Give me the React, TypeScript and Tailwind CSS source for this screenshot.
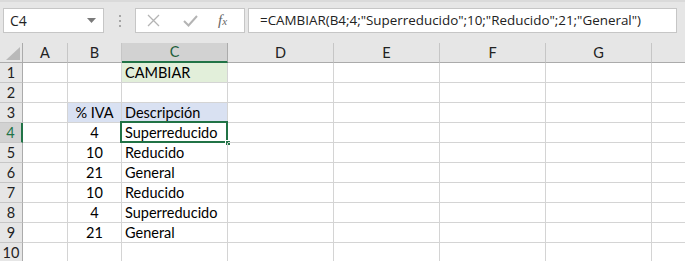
import React from "react";

const cols = ["A", "B", "C", "D", "E", "F", "G", ""];
const widths = ["w-[45px]", "w-[54px]", "w-[106px]", "w-[106px]", "w-[106px]", "w-[106px]", "w-[106px]", "w-[40px]"];

type Cell = { text?: string; align?: "left" | "center"; bg?: string };

const data: Record<number, Record<number, Cell>> = {
  1: { 2: { text: "CAMBIAR", bg: "bg-[#e2efda]" } },
  3: { 1: { text: "% IVA", align: "center", bg: "bg-[#d9e1f2]" }, 2: { text: "Descripción", bg: "bg-[#d9e1f2]" } },
  4: { 1: { text: "4", align: "center" }, 2: { text: "Superreducido" } },
  5: { 1: { text: "10", align: "center" }, 2: { text: "Reducido" } },
  6: { 1: { text: "21", align: "center" }, 2: { text: "General" } },
  7: { 1: { text: "10", align: "center" }, 2: { text: "Reducido" } },
  8: { 1: { text: "4", align: "center" }, 2: { text: "Superreducido" } },
  9: { 1: { text: "21", align: "center" }, 2: { text: "General" } },
};

const rows = [1, 2, 3, 4, 5, 6, 7, 8, 9, 10];

export default function App() {
  return (
    <div className="w-[685px] h-[261px] overflow-hidden bg-white font-['Lato',sans-serif]">
      {/* barra de fórmulas */}
      <div className="h-[43px] bg-[#e6e6e6] border-t-[2px] border-[#dadada] flex items-start pt-[6px]">
        <div className="ml-[3px] w-[101px] h-[25px] shrink-0 bg-white border border-[#c6c6c6] flex items-center justify-between pl-[6px] pr-[7px]">
          <span className="text-[14px] text-[#222] font-['Open_Sans',sans-serif]">C4</span>
          <svg width="9" height="5" viewBox="0 0 9 5"><path d="M0 0h9L4.5 5z" fill="#7a7a7a" /></svg>
        </div>
        <div className="w-[31px] h-[25px] shrink-0 flex flex-col items-center justify-center gap-[3px]">
          <span className="w-[2px] h-[2px] bg-[#a6a6a6]" />
          <span className="w-[2px] h-[2px] bg-[#a6a6a6]" />
          <span className="w-[2px] h-[2px] bg-[#a6a6a6]" />
        </div>
        <div className="w-[110px] h-[25px] shrink-0 bg-white border border-[#c6c6c6] flex items-center">
          <svg className="ml-[11px]" width="13" height="13" viewBox="0 0 13 13">
            <path d="M1 1l11 11M12 1L1 12" stroke="#b4b4b4" strokeWidth="1.3" />
          </svg>
          <svg className="ml-[23px]" width="15" height="12" viewBox="0 0 15 12">
            <path d="M1 6l4.5 4.5L14 1" stroke="#b4b4b4" strokeWidth="2" fill="none" />
          </svg>
          <span className="ml-[20px] text-[15px] italic text-[#666] font-['Liberation_Serif',serif] leading-none">
            f<span className="text-[11px]">x</span>
          </span>
        </div>
        <div className="ml-[3px] w-[429px] h-[25px] shrink-0 bg-white border border-[#c6c6c6] flex items-center pl-[11px]">
          <span className="text-[13.4px] text-[#222] font-['Open_Sans',sans-serif] whitespace-nowrap">
            =CAMBIAR(B4;4;"Superreducido";10;"Reducido";21;"General")
          </span>
        </div>
      </div>

      {/* cabecera de columnas */}
      <div className="flex h-[20px] bg-[#e6e6e6]">
        <div className="w-[23px] h-[20px] shrink-0 border-r border-b border-[#ababab] flex items-end justify-end pr-[2px] pb-[2px]">
          <svg width="14" height="13" viewBox="0 0 14 13"><path d="M14 0v13H0z" fill="#b9b9b9" /></svg>
        </div>
        {cols.map((c, i) =>
          c === "C" ? (
            <div key={i} className={`${widths[i]} h-[20px] shrink-0 bg-[#d2d2d2] border-r border-[#ababab] border-b-2 border-b-[#217346] flex items-center justify-center text-[14.5px] text-[#1d5e3a]`}>
              {c}
            </div>
          ) : (
            <div key={i} className={`${widths[i]} h-[20px] shrink-0 border-r border-[#c6c6c6] border-b border-b-[#ababab] flex items-center justify-center text-[14.5px] text-[#222]`}>
              {c}
            </div>
          )
        )}
      </div>

      {/* filas */}
      {rows.map((r) => (
        <div key={r} className="flex h-[20px]">
          {r === 4 ? (
            <div className="w-[23px] h-[20px] shrink-0 bg-[#d2d2d2] border-r-2 border-[#217346] border-b border-b-[#c6c6c6] flex items-center justify-center text-[14.5px] text-[#217346]">
              {r}
            </div>
          ) : (
            <div className="w-[23px] h-[20px] shrink-0 bg-[#e6e6e6] border-r border-[#ababab] border-b border-b-[#c6c6c6] flex items-center justify-center text-[14.5px] text-[#222]">
              {r}
            </div>
          )}
          {cols.map((_, i) => {
            const cell = data[r]?.[i] ?? {};
            const selected = r === 4 && i === 2;
            return (
              <div
                key={i}
                className={`${widths[i]} h-[20px] shrink-0 relative border-r border-b border-[#d4d4d4] ${cell.bg ?? ""} flex items-center ${
                  cell.align === "center" ? "justify-center" : "justify-start pl-[3px]"
                } text-[14.5px] text-black whitespace-nowrap`}
              >
                {cell.text}
                {selected && (
                  <>
                    <div className="absolute left-[-2px] top-[-2px] w-[108px] h-[22px] border-2 border-[#217346]" />
                    <div className="absolute right-[-4px] bottom-[-4px] w-[6px] h-[6px] bg-[#217346] border border-white" />
                  </>
                )}
              </div>
            );
          })}
        </div>
      ))}
    </div>
  );
}
